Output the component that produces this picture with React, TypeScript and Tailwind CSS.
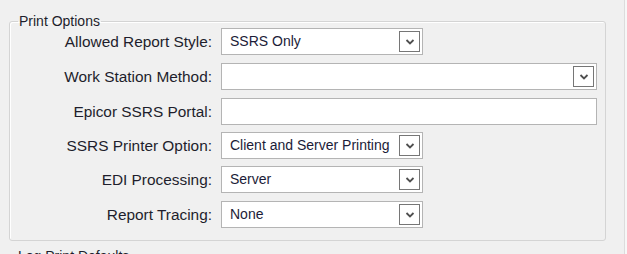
import React from "react";

const Chevron = () => (
  <svg width="10" height="6" viewBox="0 0 10 6">
    <polyline points="1.5,1 5,4.5 8.5,1" fill="none" stroke="#4f4f4f" strokeWidth="1.8" />
  </svg>
);

function Combo({ value, width, dropdown = true }: { value?: string; width: string; dropdown?: boolean }) {
  return (
    <div className={`${width} h-[27px] flex items-center justify-between bg-white border border-[#b4b4b4] pl-[8px] pr-[2px] text-[#1c1c38] text-[14px]`}>
      <span className="whitespace-nowrap">{value}</span>
      {dropdown && (
        <div className="w-[21px] h-[21px] border border-[#767676] bg-white flex items-center justify-center">
          <Chevron />
        </div>
      )}
    </div>
  );
}

function Row({ label, children, mt }: { label: string; children: React.ReactNode; mt: string }) {
  return (
    <div className={`flex items-center ${mt}`}>
      <div className="w-[202px] text-right whitespace-nowrap text-[#1e1e2c] text-[15.4px]">{label}</div>
      <div className="ml-[9px]">{children}</div>
    </div>
  );
}

export default function App() {
  return (
    <div className="w-[627px] h-[254px] bg-[#f0f0f0] flex overflow-hidden font-['Liberation_Sans',Arial,sans-serif] text-[15px]">
      <div className="w-[624px] pl-[9px] pt-[13px]">
        <fieldset className="w-[597px] border border-[#d4d4d4] rounded-[3px] pb-[12px] shadow-[inset_1px_1px_0_#ffffff]">
          <legend className="ml-[8px] px-[1px] text-[14px] leading-[16px] text-[#1e1e2c]">Print Options</legend>
          <div className="flex flex-col">
            <Row label="Allowed Report Style:" mt="-mt-px">
              <Combo value="SSRS Only" width="w-[202px]" />
            </Row>
            <Row label="Work Station Method:" mt="mt-[8px]">
              <Combo width="w-[376px]" />
            </Row>
            <Row label="Epicor SSRS Portal:" mt="mt-[8px]">
              <Combo width="w-[376px]" dropdown={false} />
            </Row>
            <Row label="SSRS Printer Option:" mt="mt-[7px]">
              <Combo value="Client and Server Printing" width="w-[202px]" />
            </Row>
            <Row label="EDI Processing:" mt="mt-[7px]">
              <Combo value="Server" width="w-[202px]" />
            </Row>
            <Row label="Report Tracing:" mt="mt-[8px]">
              <Combo value="None" width="w-[202px]" />
            </Row>
          </div>
        </fieldset>
        <div className="mt-[6px] pl-[9px] text-[#1e1e2c] text-[14px] leading-[18px] whitespace-nowrap">Log Print Defaults</div>
      </div>
      <div className="w-px h-full bg-[#dcdcdc]" />
      <div className="w-[2px] h-full bg-[#f7f7f7]" />
    </div>
  );
}
